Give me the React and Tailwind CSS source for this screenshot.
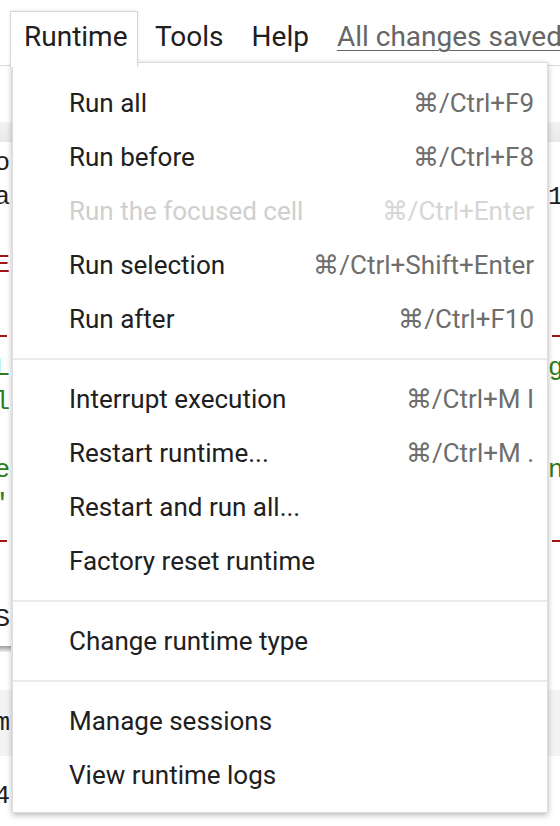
const sections = [
  [
    { label: "Run all", keys: "⌘/Ctrl+F9" },
    { label: "Run before", keys: "⌘/Ctrl+F8" },
    { label: "Run the focused cell", keys: "⌘/Ctrl+Enter", disabled: true },
    { label: "Run selection", keys: "⌘/Ctrl+Shift+Enter" },
    { label: "Run after", keys: "⌘/Ctrl+F10" },
  ],
  [
    { label: "Interrupt execution", keys: "⌘/Ctrl+M I" },
    { label: "Restart runtime...", keys: "⌘/Ctrl+M ." },
    { label: "Restart and run all..." },
    { label: "Factory reset runtime" },
  ],
  [{ label: "Change runtime type" }],
  [{ label: "Manage sessions" }, { label: "View runtime logs" }],
];

// edge glyphs of the notebook that peek out beside the menu
const codeRows = [
  { left: "o", right: "" },
  { left: "a", right: "1" },
  { left: "", right: "" },
  { left: "E", right: "", leftColor: "text-[#a31515]" },
  { left: "", right: "" },
];

const outRows = [
  { left: "L", right: "g" },
  { left: "l", right: "" },
  { left: "", right: "" },
  { left: "e", right: "n" },
  { left: "'", right: "" },
];

function EdgeRow({ left, right, leftColor = "text-[#1f1f1f]", rightColor = "text-[#1f1f1f]" }) {
  return (
    <div className="flex justify-between items-center h-[34px] font-['Liberation_Mono',monospace] text-[26px]">
      <div className="w-[10px] overflow-hidden flex justify-end whitespace-nowrap">
        <span className={leftColor}>{left}</span>
      </div>
      <div className="w-[12px] overflow-hidden whitespace-nowrap">
        <span className={rightColor}>{right}</span>
      </div>
    </div>
  );
}

function RedRule() {
  return (
    <div className="flex justify-between h-[2px]">
      <div className="w-[7px] bg-[#a31515]" />
      <div className="w-[8px] bg-[#a31515]" />
    </div>
  );
}

function MenuItem({ label, keys, disabled }) {
  return (
    <div className="flex items-center justify-between h-[54px] pl-[56px] pr-[13px] text-[26px]">
      <span className={disabled ? "text-[#cfcfcf]" : "text-[#202020]"}>{label}</span>
      {keys && <span className={disabled ? "text-[#d6d6d6]" : "text-[#6e6e6e]"}>{keys}</span>}
    </div>
  );
}

export default function App() {
  return (
    <div className="relative w-[560px] h-[826px] overflow-hidden bg-white font-['Roboto',sans-serif]">
      {/* menu bar */}
      <div className="flex items-start h-[66px] pt-[11px] border-b border-[#dadce0] whitespace-nowrap text-[28px] leading-[34px]">
        <div className="relative z-20 shrink-0 ml-[10px] h-[56px] w-[128px] pl-[13px] pt-[8px] bg-white border border-b-0 border-[#d6d6d6] shadow-[0_-1px_3px_rgba(0,0,0,0.08)] text-[#202020]">
          Runtime
        </div>
        <div className="shrink-0 ml-[17px] pt-[9px] text-[#202020]">Tools</div>
        <div className="shrink-0 ml-[28px] pt-[9px] text-[#202020]">Help</div>
        <div className="shrink-0 ml-[28px] pt-[9px] text-[#666] underline underline-offset-[4px] decoration-[1px]">
          All changes saved
        </div>
      </div>

      {/* notebook behind the menu */}
      <div className="flex flex-col">
        <div className="h-[56px]" />
        <div className="h-[20px] bg-gradient-to-b from-[#f3f3f3] to-[#e9e9e9]" />
        <div className="h-[4px]" />
        {codeRows.map((r, i) => (
          <EdgeRow key={i} {...r} />
        ))}
        <div className="h-[19px]" />
        <RedRule />
        <div className="h-[14px]" />
        {outRows.map((r, i) => (
          <EdgeRow key={i} {...r} leftColor="text-[#2e7d1a]" rightColor="text-[#2e7d1a]" />
        ))}
        <div className="h-[19px]" />
        <RedRule />
        <div className="h-[60px]" />
        <EdgeRow left="S" right="" />
        <div className="h-[10px]" />
        <div className="flex">
          <div className="w-[11px] h-[6px] bg-gradient-to-b from-[#9e9e9e] to-[#f0f0f0]" />
        </div>
        <div className="h-[38px]" />
        <div className="bg-[#f3f3f3] py-[16px]">
          <EdgeRow left="m" right="" />
        </div>
        <div className="h-[23px]" />
        <EdgeRow left="4" right="" />
      </div>

      {/* dropdown */}
      <div className="absolute z-10 left-[12px] top-[62px] w-[536px] h-[751px] bg-white border border-[#dcdcdc] shadow-[0_2px_6px_rgba(0,0,0,0.28)] pt-[13px] pb-[11px] whitespace-nowrap">
        {sections.map((items, si) => (
          <div key={si}>
            {si > 0 && <div className="my-[12px] h-[2px] bg-[#ebebeb]" />}
            {items.map((it) => (
              <MenuItem key={it.label} {...it} />
            ))}
          </div>
        ))}
      </div>
    </div>
  );
}
